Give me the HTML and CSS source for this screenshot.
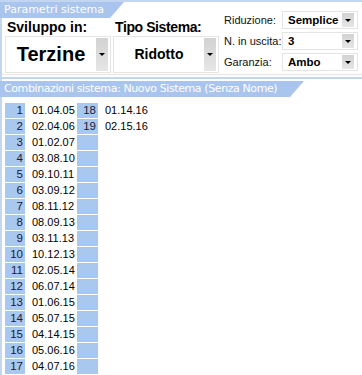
FILE: index.html
```html
<!DOCTYPE html>
<html>
   <head>
      <title>Parametri sistema</title>
      <meta name="viewport" content="width=device-width, initial-scale=1">
      <link rel="stylesheet" href="styles.css">
   </head>
   <body>
      <div class="frame">
         <div class="params">
            <div class="params-left">
               <div class="tab tab-params">Parametri sistema</div>
               <div class="groups">
                  <div class="group group-sviluppo">
                     <div class="group-label">Sviluppo in:</div>
                     <div class="select select-big">
                        <span class="select-value">Terzine</span>
                        <span class="select-btn"><i class="arrow"></i></span>
                     </div>
                  </div>
                  <div class="group group-tipo">
                     <div class="group-label">Tipo Sistema:</div>
                     <div class="select select-mid">
                        <span class="select-value">Ridotto</span>
                        <span class="select-btn"><i class="arrow"></i></span>
                     </div>
                  </div>
               </div>
            </div>
            <div class="params-right">
               <div class="field-label">Riduzione:</div>
               <div class="select select-small">
                  <span class="select-value">Semplice</span>
                  <span class="select-btn"><i class="arrow"></i></span>
               </div>
               <div class="field-label">N. in uscita:</div>
               <div class="select select-small">
                  <span class="select-value">3</span>
                  <span class="select-btn"><i class="arrow"></i></span>
               </div>
               <div class="field-label">Garanzia:</div>
               <div class="select select-small">
                  <span class="select-value">Ambo</span>
                  <span class="select-btn"><i class="arrow"></i></span>
               </div>
            </div>
         </div>

         <div class="combos">
            <div class="tab tab-combos">Combinazioni sistema: Nuovo Sistema (Senza Nome)</div>
            <div class="combo-grid">
               <span class="num">1</span><span class="date">01.04.05</span><span class="num">18</span><span class="date">01.14.16</span>
               <span class="num">2</span><span class="date">02.04.06</span><span class="num">19</span><span class="date">02.15.16</span>
               <span class="num">3</span><span class="date">01.02.07</span><span class="num"></span><span class="date"></span>
               <span class="num">4</span><span class="date">03.08.10</span><span class="num"></span><span class="date"></span>
               <span class="num">5</span><span class="date">09.10.11</span><span class="num"></span><span class="date"></span>
               <span class="num">6</span><span class="date">03.09.12</span><span class="num"></span><span class="date"></span>
               <span class="num">7</span><span class="date">08.11.12</span><span class="num"></span><span class="date"></span>
               <span class="num">8</span><span class="date">08.09.13</span><span class="num"></span><span class="date"></span>
               <span class="num">9</span><span class="date">03.11.13</span><span class="num"></span><span class="date"></span>
               <span class="num">10</span><span class="date">10.12.13</span><span class="num"></span><span class="date"></span>
               <span class="num">11</span><span class="date">02.05.14</span><span class="num"></span><span class="date"></span>
               <span class="num">12</span><span class="date">06.07.14</span><span class="num"></span><span class="date"></span>
               <span class="num">13</span><span class="date">01.06.15</span><span class="num"></span><span class="date"></span>
               <span class="num">14</span><span class="date">05.07.15</span><span class="num"></span><span class="date"></span>
               <span class="num">15</span><span class="date">04.14.15</span><span class="num"></span><span class="date"></span>
               <span class="num">16</span><span class="date">05.06.16</span><span class="num"></span><span class="date"></span>
               <span class="num">17</span><span class="date">04.07.16</span><span class="num"></span><span class="date"></span>
            </div>
         </div>
      </div>
   </body>
</html>
```

FILE: styles.css
```css
body, html {
   margin: 0;
   background: #fff;
   font-family: "Liberation Sans", Arial, sans-serif;
   color: #000;
   overflow: hidden;
}

.frame {
   border-left: 2px solid #c2d6f2;
   height: 375px;
   box-sizing: border-box;
}

.tab {
   box-sizing: border-box;
   height: 16px;
   line-height: 16px;
   margin-left: -2px;
   padding-left: 4px;
   background-color: #a9c5ee;
   color: #fff;
   font-family: "DejaVu Sans", Verdana, sans-serif;
   font-size: 11px;
   white-space: nowrap;
   overflow: hidden;
   clip-path: polygon(0 0, 100% 0, calc(100% - 14px) 100%, 0 100%);
}

/* top panel */

.params {
   display: flex;
   border-top: 2px solid #c2d6f2;
   height: 72px;
   border-bottom: 1px solid #e6e6e6;
}

.params-left {
   width: 220px;
}

.tab-params {
   width: 124px;
}

.groups {
   display: flex;
   gap: 2px;
   padding-left: 3px;
}

.group-label {
   height: 18px;
   line-height: 18px;
   font-weight: bold;
   font-size: 14px;
   padding-left: 2px;
}

.group-tipo .group-label {
   letter-spacing: -0.4px;
}

.select {
   display: flex;
   align-items: stretch;
   border: 1px solid #e4e4e4;
   box-sizing: border-box;
   background: #fff;
}

.select-value {
   flex: 1;
   font-weight: bold;
   white-space: nowrap;
}

.select-btn {
   width: 12px;
   margin: 1px 2px 1px 0;
   background: linear-gradient(to bottom, #d2d2d2, #e6e6e6);
   display: flex;
   align-items: center;
   justify-content: center;
}

.arrow {
   width: 0;
   height: 0;
   border-left: 3px solid transparent;
   border-right: 3px solid transparent;
   border-top: 3px solid #000;
}

.select-big {
   width: 106px;
   height: 37px;
}

.select-big .select-value {
   font-size: 20px;
   line-height: 35px;
   text-align: center;
}

.select-mid {
   width: 106px;
   height: 37px;
}

.select-mid .select-value {
   font-size: 14px;
   line-height: 35px;
   text-align: center;
}

.params-right {
   flex: 1;
   display: grid;
   grid-template-columns: 58px 76px;
   grid-auto-rows: 18px;
   row-gap: 3px;
   padding: 9px 0 0 2px;
   align-items: center;
}

.field-label {
   font-size: 11px;
   color: #111;
}

.select-small {
   height: 18px;
}

.select-small .select-value {
   font-size: 11.5px;
   line-height: 16px;
   padding-left: 5px;
}

.select-small .select-btn {
   margin: 1px 3px 1px 0;
}

/* combinations */

.combos {
   border-top: 2px solid #c2d6f2;
   margin-top: 2px;
   padding-top: 2px;
}

.tab-combos {
   width: 304px;
   letter-spacing: -0.4px;
}

.combo-grid {
   display: grid;
   grid-template-columns: 20px 52px 21px 80px;
   grid-auto-rows: 15px;
   row-gap: 1px;
   padding: 6px 0 0 3px;
   font-size: 11.5px;
}

.num {
   background-color: #a9c8f0;
   text-align: right;
   padding-right: 2px;
   line-height: 15px;
   color: #1a2030;
}

.date {
   padding-left: 7px;
   line-height: 15px;
   font-size: 11px;
   white-space: nowrap;
}
```
